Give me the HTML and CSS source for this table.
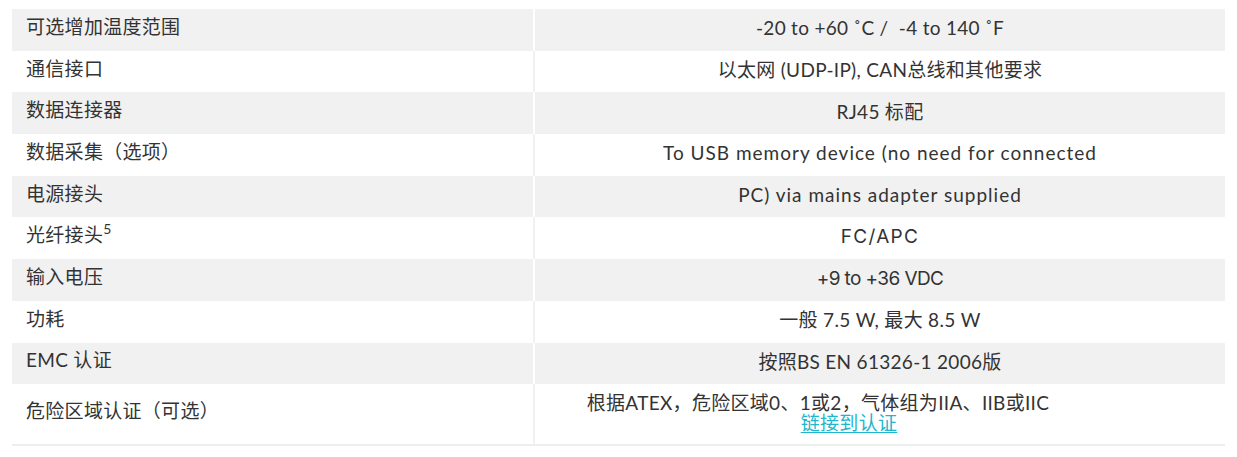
FILE: index.html
```html
<!DOCTYPE html>
<html lang="zh">
<head>
<meta charset="utf-8">
<link rel="stylesheet" href="styles.css">
</head>
<body>
<div class="wrap">
<table class="spec">
<tbody>
<tr class="alt"><td class="key">可选增加温度范围</td><td class="val">-20 to +60 ˚C /&nbsp; -4 to 140 ˚F</td></tr>
<tr><td class="key">通信接口</td><td class="val">以太网 (UDP-IP), CAN总线和其他要求</td></tr>
<tr class="alt"><td class="key">数据连接器</td><td class="val">RJ45 标配</td></tr>
<tr><td class="key">数据采集（选项）</td><td class="val"><span class="wide">To USB memory device (no need for connected</span></td></tr>
<tr class="alt"><td class="key">电源接头</td><td class="val"><span class="wide">PC) via mains adapter supplied</span></td></tr>
<tr><td class="key">光纤接头<sup class="sup">5</sup></td><td class="val"><span class="alt-font spaced">FC/APC</span></td></tr>
<tr class="alt"><td class="key">输入电压</td><td class="val"><span class="alt-font tight">+9 to +36 VDC</span></td></tr>
<tr><td class="key">功耗</td><td class="val">一般 7.5 W, 最大 8.5 W</td></tr>
<tr class="alt"><td class="key">EMC 认证</td><td class="val">按照BS EN 61326-1 2006版</td></tr>
<tr class="last"><td class="key">危险区域认证（可选）</td><td class="val val-multi"><span class="line1">根据ATEX，危险区域0、1或2，气体组为IIA、IIB或IIC</span><br><a class="link" href="#">链接到认证</a></td></tr>
</tbody>
</table>
</div>
</body>
</html>
```

FILE: styles.css
```css
html, body {
  margin: 0;
  padding: 0;
  background: #ffffff;
}

.wrap {
  padding: 9px 12px 0 12px;
}

.spec {
  width: 1213px;
  border-collapse: collapse;
  font-family: "Lato", "Noto Sans CJK SC", sans-serif;
  font-size: 19px;
  color: #333333;
  letter-spacing: 0.3px;
}

.spec td {
  height: 41.7px;
  box-sizing: border-box;
  padding: 0 14px 6px 14px;
  vertical-align: middle;
  line-height: 22px;
}

.spec .key {
  width: 522px;
  text-align: left;
}

.spec .val {
  text-align: center;
  border-left: 2px solid #f1f1f1;
  padding-bottom: 3px;
}

.spec tr.alt td {
  background: #f1f1f1;
}

.spec tr.alt .val {
  border-left-color: #ffffff;
}

.spec tr.last td {
  height: 61px;
  border-bottom: 2px solid #eeeeee;
}

.sup {
  font-size: 14px;
  line-height: 0;
  vertical-align: 8px;
}

.wide {
  letter-spacing: 1px;
}

.alt-font {
  font-family: "Inter", "Noto Sans CJK SC", sans-serif;
  letter-spacing: 0;
}

.spaced {
  letter-spacing: 1.3px;
}

.tight {
  letter-spacing: -0.6px;
}

.spec .val-multi {
  line-height: 20px;
  padding-right: 76px;
}

.line1 {
  padding-right: 62px;
}

.link {
  color: #1fb5cc;
  text-decoration: underline;
  text-underline-offset: 2px;
}
```
